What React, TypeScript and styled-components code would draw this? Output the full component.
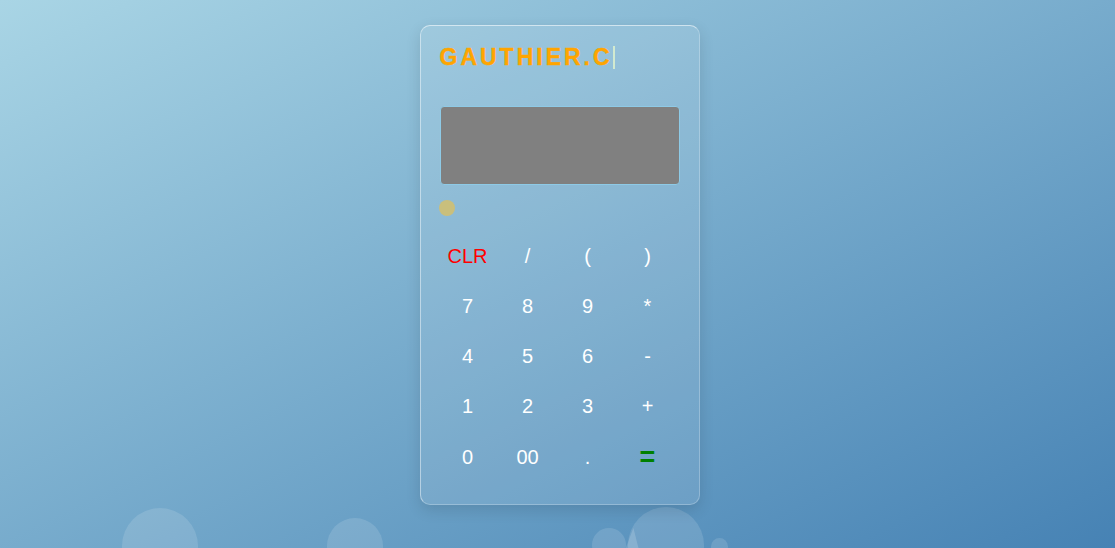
import React from "react";
import styled, { createGlobalStyle } from "styled-components";

const GlobalStyle = createGlobalStyle`
  html, body {
    margin: 0;
    padding: 0;
    height: 100%;
  }
  body {
    font-family: "Liberation Sans", Arial, sans-serif;
    background: linear-gradient(to bottom right, #a9d5e5, #4682b4);
    overflow: hidden;
  }
  #root {
    min-height: 100vh;
  }
`;

const Page = styled.div`
  position: relative;
  min-height: 100vh;
  display: flex;
  justify-content: center;
  align-items: flex-start;
  padding: 25px 0 0 4px;
  box-sizing: border-box;
  overflow: hidden;
`;

const Card = styled.div`
  position: relative;
  z-index: 1;
  width: 280px;
  box-sizing: border-box;
  padding: 20px 20px 21px;
  border-radius: 10px;
  background: rgba(255, 255, 255, 0.1);
  border: 1px solid rgba(255, 255, 255, 0.25);
  border-top-color: rgba(255, 255, 255, 0.55);
  border-left-color: rgba(255, 255, 255, 0.45);
  box-shadow: 0 5px 15px rgba(0, 0, 0, 0.12);
  display: flex;
  flex-direction: column;
`;

const Title = styled.div`
  display: inline-block;
  align-self: flex-start;
  font-family: "Liberation Sans", Arial, sans-serif;
  font-weight: 700;
  font-size: 23px;
  line-height: 23px;
  letter-spacing: 3px;
  color: #ffa500;
  -webkit-text-stroke: 0.4px #ffa500;
  border-right: 2px solid #d2ead0;
  margin-left: -1px;
`;

const Display = styled.div`
  margin: 37px -1px 0 -1px;
  height: 79px;
  box-sizing: border-box;
  background: #808080;
  border: 1px solid #8ecae6;
  border-radius: 4px;
`;

const Light = styled.div`
  margin: 15px 0 0 -2px;
  width: 16px;
  height: 16px;
  border-radius: 50%;
  background: #c9bf7c;
  filter: blur(0.6px);
`;

const Keys = styled.div`
  margin: 15px 0 0 -3px;
  width: 240px;
  display: grid;
  grid-template-columns: repeat(4, 60px);
`;

type KeyKind = "num" | "clear" | "equal";

const Key = styled.button<{ $kind: KeyKind }>`
  background: transparent;
  border: none;
  padding: 13px 0;
  margin: 0;
  font-family: "Liberation Sans", Arial, sans-serif;
  font-size: ${(p) => (p.$kind === "equal" ? "27px" : "20px")};
  line-height: ${(p) => (p.$kind === "equal" ? "26px" : "24px")};
  font-weight: ${(p) => (p.$kind === "equal" ? 700 : 400)};
  color: ${(p) =>
    p.$kind === "clear" ? "#ff0000" : p.$kind === "equal" ? "#008000" : "#ffffff"};
  text-align: center;
  cursor: pointer;
`;

const Bubble = styled.span<{ $size: number }>`
  position: absolute;
  width: ${(p) => p.$size}px;
  height: ${(p) => p.$size}px;
  border-radius: 50%;
  background: rgba(255, 255, 255, 0.13);
  pointer-events: none;
`;

const Shard = styled.span`
  position: absolute;
  width: 14px;
  height: 22px;
  background: rgba(255, 255, 255, 0.16);
  clip-path: polygon(60% 0, 100% 100%, 0 100%);
  pointer-events: none;
`;

const keys: { label: string; kind: KeyKind }[] = [
  { label: "CLR", kind: "clear" },
  { label: "/", kind: "num" },
  { label: "(", kind: "num" },
  { label: ")", kind: "num" },
  { label: "7", kind: "num" },
  { label: "8", kind: "num" },
  { label: "9", kind: "num" },
  { label: "*", kind: "num" },
  { label: "4", kind: "num" },
  { label: "5", kind: "num" },
  { label: "6", kind: "num" },
  { label: "-", kind: "num" },
  { label: "1", kind: "num" },
  { label: "2", kind: "num" },
  { label: "3", kind: "num" },
  { label: "+", kind: "num" },
  { label: "0", kind: "num" },
  { label: "00", kind: "num" },
  { label: ".", kind: "num" },
  { label: "=", kind: "equal" },
];

const bubbles = [
  { left: 122, top: 508, size: 76 },
  { left: 327, top: 518, size: 56 },
  { left: 592, top: 528, size: 34 },
  { left: 628, top: 507, size: 76 },
  { left: 711, top: 538, size: 17 },
];

export default function App() {
  return (
    <>
      <GlobalStyle />
      <Page>
        {bubbles.map((b, i) => (
          <Bubble key={i} $size={b.size} style={{ left: b.left, top: b.top }} />
        ))}
        <Shard style={{ left: 625, top: 528 }} />
        <Card>
          <Title>GAUTHIER.C</Title>
          <Display />
          <Light />
          <Keys>
            {keys.map((k) => (
              <Key key={k.label} $kind={k.kind}>
                {k.label}
              </Key>
            ))}
          </Keys>
        </Card>
      </Page>
    </>
  );
}
